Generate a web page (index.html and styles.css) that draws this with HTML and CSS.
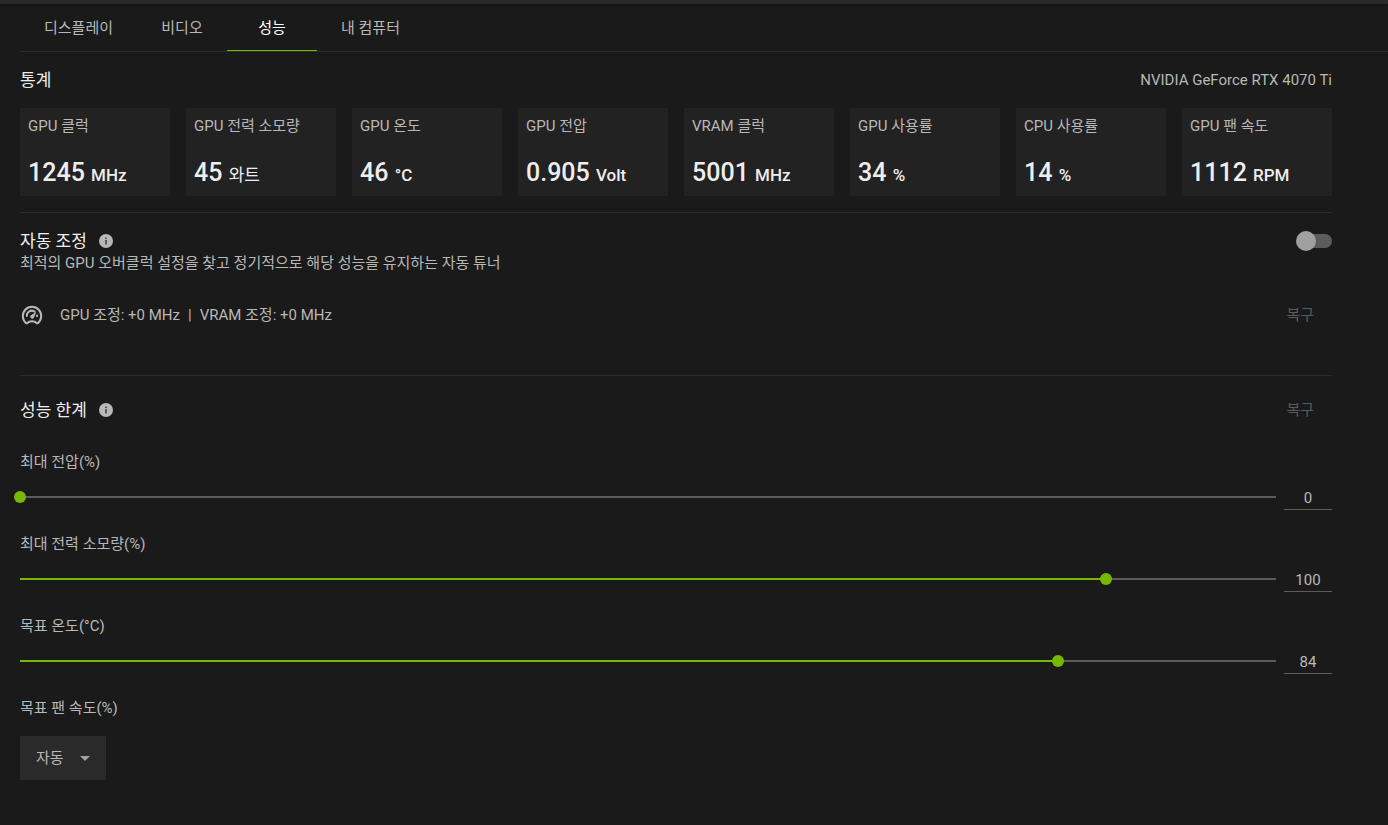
FILE: index.html
```html
<!DOCTYPE html>
<html lang="ko">
<head>
<meta charset="utf-8">
<title>성능</title>
<link rel="stylesheet" href="styles.css">
</head>
<body>
<div class="topbar"></div>
<nav class="tabs">
  <button class="tab" type="button">디스플레이</button>
  <button class="tab" type="button">비디오</button>
  <button class="tab tab-active" type="button">성능</button>
  <button class="tab" type="button">내 컴퓨터</button>
</nav>
<main class="page">
  <section class="stats">
    <header class="row">
      <h2 class="heading">통계</h2>
      <span>NVIDIA GeForce RTX 4070 Ti</span>
    </header>
    <div class="cards">
      <div class="card"><span>GPU 클럭</span><strong class="value">1245 <small class="unit">MHz</small></strong></div>
      <div class="card"><span>GPU 전력 소모량</span><strong class="value">45 <small class="unit unit-korean">와트</small></strong></div>
      <div class="card"><span>GPU 온도</span><strong class="value">46 <small class="unit">°C</small></strong></div>
      <div class="card"><span>GPU 전압</span><strong class="value">0.905 <small class="unit">Volt</small></strong></div>
      <div class="card"><span>VRAM 클럭</span><strong class="value">5001 <small class="unit">MHz</small></strong></div>
      <div class="card"><span>GPU 사용률</span><strong class="value">34 <small class="unit">%</small></strong></div>
      <div class="card"><span>CPU 사용률</span><strong class="value">14 <small class="unit">%</small></strong></div>
      <div class="card"><span>GPU 팬 속도</span><strong class="value">1112 <small class="unit">RPM</small></strong></div>
    </div>
  </section>

  <section class="tuning">
    <div class="row">
      <div class="title">
        <h2 class="heading"><label for="auto-tune">자동 조정</label></h2>
        <svg class="info" viewBox="0 0 14 14" aria-hidden="true"><circle cx="7" cy="7" r="7"/><path d="M6.200 3.500h1.600v1.500H6.200zM6.200 6h1.600v4.500H6.200z"/></svg>
      </div>
      <input class="switch" id="auto-tune" type="checkbox" role="switch">
    </div>
    <p class="description">최적의 GPU 오버클럭 설정을 찾고 정기적으로 해당 성능을 유지하는 자동 튜너</p>
    <div class="row tuning-status">
      <div class="offsets">
        <svg class="gauge" viewBox="0 0 24 24" aria-hidden="true">
          <path d="M6.200 20.200A9.200 9.200 0 1 1 17.800 20.200H16.800C15.800 18.900 14 18.300 12 18.300S8.200 18.900 7.200 20.200Z"/>
          <path d="M7 13.800A5 5 0 0 1 15.200 9M16.900 11.800A5 5 0 0 1 17 13.800"/>
          <path class="needle" d="M16.400 8.800l-2.500 6a2 2 0 1 1-3.300-2.400z"/>
        </svg>
        <span>GPU 조정: +0 MHz</span>
        <span class="divider">|</span>
        <span>VRAM 조정: +0 MHz</span>
      </div>
      <button class="restore" type="button" disabled>복구</button>
    </div>
  </section>

  <section class="limits">
    <div class="row limits-header">
      <div class="title">
        <h2 class="heading">성능 한계</h2>
        <svg class="info" viewBox="0 0 14 14" aria-hidden="true"><circle cx="7" cy="7" r="7"/><path d="M6.200 3.500h1.600v1.500H6.200zM6.200 6h1.600v4.500H6.200z"/></svg>
      </div>
      <button class="restore" type="button" disabled>복구</button>
    </div>
    <div class="limit">
      <label for="voltage">최대 전압(%)</label>
      <div class="control">
        <input class="slider" id="voltage" type="range" min="0" max="100" value="0" style="--fill: 0">
        <input class="number" type="text" value="0" aria-label="최대 전압(%)">
      </div>
    </div>
    <div class="limit">
      <label for="power">최대 전력 소모량(%)</label>
      <div class="control">
        <input class="slider" id="power" type="range" min="36" max="110" value="100" style="--fill: 0.865">
        <input class="number" type="text" value="100" aria-label="최대 전력 소모량(%)">
      </div>
    </div>
    <div class="limit">
      <label for="temperature">목표 온도(°C)</label>
      <div class="control">
        <input class="slider" id="temperature" type="range" min="65" max="88" value="84" style="--fill: 0.826">
        <input class="number" type="text" value="84" aria-label="목표 온도(°C)">
      </div>
    </div>
    <div class="limit">
      <label for="fan">목표 팬 속도(%)</label>
      <div class="dropdown">
        <select class="select" id="fan"><option>자동</option></select>
        <svg class="caret" viewBox="0 0 10 5" aria-hidden="true"><path d="M0 0h10L5 5z"/></svg>
      </div>
    </div>
  </section>
</main>
</body>
</html>
```
FILE: styles.css
```css
* {
  box-sizing: border-box;
}

body {
  margin: 0;
  background: #1a1a1a;
  color: #b8b8b8;
  font: 15px/20px Roboto, "Noto Sans CJK KR", sans-serif;
}

button,
input,
select {
  margin: 0;
  padding: 0;
  border: 0;
  background: none;
  color: inherit;
  font: inherit;
}

.topbar {
  height: 4px;
  background: #2a2a2a;
  box-shadow: 0 1px 3px #111;
}

.tabs {
  display: flex;
  height: 48px;
  margin-left: 20px;
  border-bottom: 1px solid #2e2e2e;
}

.tab {
  min-width: 90px;
  padding: 2px 24px 0;
  border-bottom: 1px solid transparent;
}

.tab-active {
  border-color: #76b900;
  color: #fff;
}

.page {
  padding: 0 56px 44px 20px;
}

.row {
  display: flex;
  align-items: center;
  justify-content: space-between;
}

.heading {
  margin: 0;
  color: #eee;
  font-size: 17px;
  font-weight: 400;
  line-height: 24px;
}

.stats {
  padding: 16px 0;
  border-bottom: 1px solid #2e2e2e;
}

.cards {
  display: grid;
  grid-template-columns: repeat(8, 1fr);
  gap: 16px;
  margin-top: 16px;
}

.card {
  display: flex;
  flex-direction: column;
  justify-content: space-between;
  height: 88px;
  padding: 8px;
  background: #222;
  white-space: nowrap;
}

.value {
  color: #eee;
  font-size: 25px;
  font-weight: 500;
  line-height: 26px;
}

.unit {
  font-size: 17px;
}

.unit-korean {
  font-weight: 400;
}

.tuning {
  padding: 16px 0 48px;
  border-bottom: 1px solid #2e2e2e;
}

.title {
  display: flex;
  align-items: center;
  gap: 12px;
}

.info {
  width: 14px;
  height: 14px;
  fill: #b8b8b8;
}

.info path {
  fill: #444;
}

.switch {
  position: relative;
  width: 34px;
  height: 14px;
  appearance: none;
  border-radius: 7px;
  background: #5c5c5c;
}

.switch::before {
  position: absolute;
  top: -3px;
  left: -2px;
  width: 20px;
  height: 20px;
  border-radius: 50%;
  background: #a0a0a0;
  content: "";
}

.description {
  margin: 0;
}

.tuning-status {
  margin-top: 30px;
}

.offsets {
  display: flex;
  align-items: center;
}

.gauge {
  width: 24px;
  height: 24px;
  margin-right: 16px;
  fill: none;
  stroke: #b8b8b8;
  stroke-width: 2;
}

.gauge .needle {
  fill: #b8b8b8;
  stroke: none;
}

.divider {
  margin: 0 8px;
}

.restore {
  padding: 0 18px;
  color: #5a5a5a;
}

.limits {
  padding-top: 22px;
}

.limits-header {
  margin-bottom: 30px;
}

.limit {
  margin-bottom: 20px;
}

.control {
  display: flex;
  align-items: center;
  height: 34px;
  margin-top: 8px;
}

.slider {
  flex: 1;
  height: 12px;
  margin: 0 2px 0 -6px;
  appearance: none;
  background:
    linear-gradient(#76b900, #76b900) 6px center / calc((100% - 12px) * var(--fill)) 2px no-repeat,
    linear-gradient(#5c5c5c, #5c5c5c) center / calc(100% - 12px) 2px no-repeat;
}

.slider::-webkit-slider-thumb {
  width: 12px;
  height: 12px;
  appearance: none;
  border-radius: 50%;
  background: #76b900;
}

.number {
  width: 48px;
  height: 26px;
  padding-top: 2px;
  border-bottom: 1px solid #5c5c5c;
  text-align: center;
}

.dropdown {
  position: relative;
  width: 86px;
  margin-top: 18px;
}

.select {
  width: 100%;
  height: 44px;
  padding-left: 16px;
  appearance: none;
  background: #2a2a2a;
}

.caret {
  position: absolute;
  top: 20px;
  right: 16px;
  width: 10px;
  height: 5px;
  fill: #a0a0a0;
  pointer-events: none;
}
```
